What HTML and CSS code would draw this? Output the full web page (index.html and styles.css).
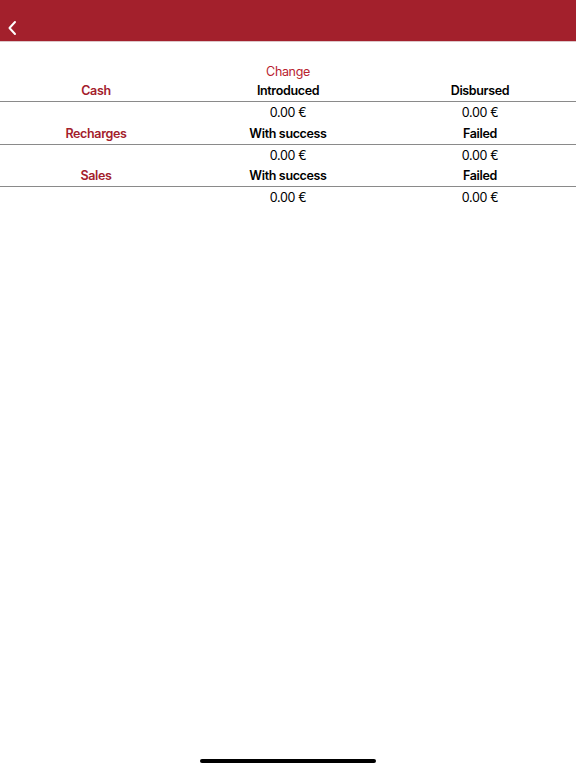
FILE: index.html
```html
<!DOCTYPE html>
<html>
<head>
<meta charset="utf-8">
<link rel="stylesheet" href="styles.css">
</head>
<body>
<div class="screen">
  <header class="navbar">
    <svg class="back" width="10" height="16" viewBox="0 0 10 16"><path d="M8 2 L2.5 8 L8 14" fill="none" stroke="#fff" stroke-width="2" stroke-linecap="round" stroke-linejoin="round"/></svg>
  </header>
  <div class="table">
    <div class="row change-row"><span></span><span class="change">Change</span><span></span></div>
    <div class="row head"><span class="label">Cash</span><span>Introduced</span><span>Disbursed</span></div>
    <div class="row values"><span></span><span>0.00 €</span><span>0.00 €</span></div>
    <div class="row head"><span class="label">Recharges</span><span>With success</span><span>Failed</span></div>
    <div class="row values"><span></span><span>0.00 €</span><span>0.00 €</span></div>
    <div class="row head"><span class="label">Sales</span><span>With success</span><span>Failed</span></div>
    <div class="row values"><span></span><span>0.00 €</span><span>0.00 €</span></div>
  </div>
  <div class="home-indicator"></div>
</div>
</body>
</html>
```
FILE: styles.css
```css
html, body {
  margin: 0;
  padding: 0;
  background: #fff;
}
.screen {
  width: 576px;
  height: 768px;
  position: relative;
  font-family: Inter, "Liberation Sans", sans-serif;
  font-size: 12.5px;
  letter-spacing: -0.35px;
  color: #000;
}
.navbar {
  height: 42px;
  background: #a3202c;
  border-bottom: 1px solid #dcc7c9;
  display: flex;
  align-items: center;
  padding-left: 7px;
  padding-top: 14px;
  box-sizing: border-box;
}
.back {
  display: block;
}
.table {
  padding-top: 19.5px;
}
.row {
  display: grid;
  grid-template-columns: 1fr 1fr 1fr;
  height: 21px;
  align-items: center;
  text-align: center;
}
.change-row {
  height: 19px;
}
.change {
  color: #b8222f;
  font-weight: 400;
}
.head {
  font-weight: 600;
  border-bottom: 1px solid #8a8a8a;
  height: 21.5px;
  box-sizing: border-box;
}
.values {
  height: 21px;
}
.label {
  color: #a3202c;
}
.home-indicator {
  position: absolute;
  left: 200px;
  top: 759px;
  width: 176px;
  height: 4px;
  border-radius: 2px;
  background: #000;
}
```
